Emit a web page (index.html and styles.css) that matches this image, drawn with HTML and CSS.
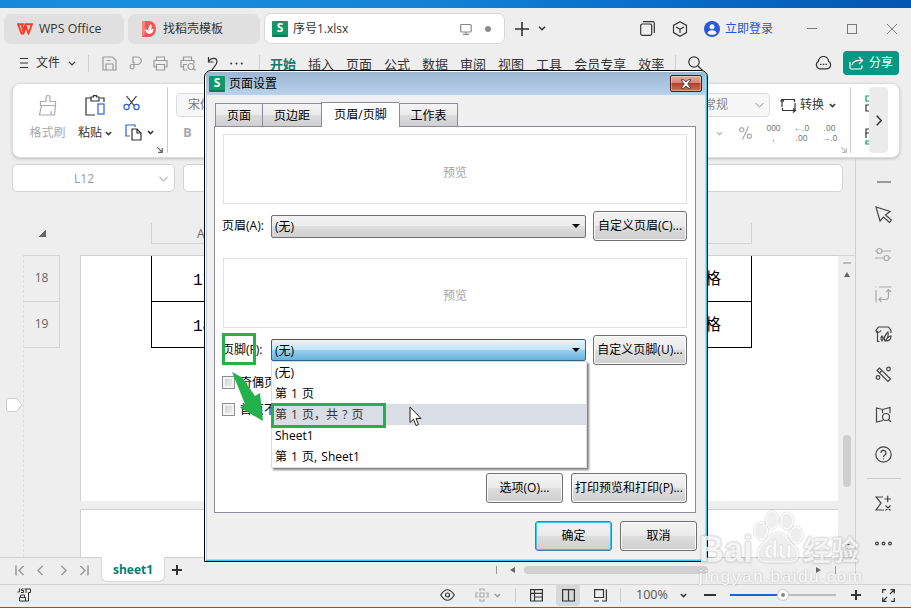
FILE: index.html
```html
<!DOCTYPE html>
<html lang="zh-CN">
<head>
  <meta charset="UTF-8">
  <title>序号1.xlsx - WPS Office</title>
  <link rel="stylesheet" href="styles.css">
</head>
<body>
  <div class="app">
    <div class="desktop-strip"></div>

    <header class="titlebar">
      <div class="doc-tab tab-home">
        <svg width="16" height="12" viewBox="0 0 16 12"><path d="M1 1.200h5l-1 2 1.200 5L8.500 1.200h6.500L11.500 10.500 9 3.500 6.500 10.500H4.500z" fill="none" stroke="#f4402a" stroke-width="1.900"/></svg>
        <span>WPS Office</span>
      </div>
      <div class="doc-tab tab-docer">
        <svg width="14" height="16" viewBox="0 0 14 16"><path d="M0 0h7a7 8 0 0 1 0 16H0z" fill="#ee5657"/><path d="M0 0h3v13l-3 3z" fill="#f98080"/><path d="M7 13c-3-1-4-3-3.500-5 1.500.5 2.500 1.500 3 2.500C6 8 6.500 5 9 3c1 2 .8 4-.2 6 .8-.8 1.700-1.200 2.700-1.200C11.500 11 10 13 7 13z" fill="#fff"/></svg>
        <span>找稻壳模板</span>
      </div>
      <div class="doc-tab tab-file">
        <span class="s-logo">S</span>
        <span>序号1.xlsx</span>
        <svg class="ic monitor" width="12" height="12" viewBox="0 0 12 12"><rect x=".7" y="1.500" width="10.500" height="7.500" rx="1"/><path d="M6 9v2M3 11.300h6"/></svg>
        <i class="unsaved"></i>
      </div>
      <svg class="ic new-tab" width="14" height="14" viewBox="0 0 14 14"><path d="M7 0v14M0 7h14" stroke-width="1.600"/></svg>
      <svg class="ic chev" width="8" height="5" viewBox="0 0 8 5"><path d="M1 .8l3 3 3-3" stroke-width="1.500"/></svg>
      <div class="window-tools">
        <svg class="ic" width="15" height="15" viewBox="0 0 15 15"><path d="M3 .7h9.500a1.800 1.800 0 0 1 1.800 1.800V12"/><rect x=".7" y="3" width="11" height="11.300" rx="1.500"/></svg>
        <svg class="ic cube" width="16" height="16" viewBox="0 0 16 16"><path d="M8 .8l6.500 3.600v7.200L8 15.200l-6.500-3.600V4.400zM4 6l4 2.200L12 6M8 8.200V12"/></svg>
        <svg class="avatar" width="16" height="16" viewBox="0 0 16 16"><circle cx="8" cy="8" r="8" fill="#2b57d9"/><circle cx="8" cy="5.700" r="2.500" fill="#fff"/><path d="M3.500 12.300c0-4 9-4 9 0-2.500 2-6.500 2-9 0z" fill="#fff"/></svg>
        <span class="login">立即登录</span>
        <svg class="ic win-btn" width="10" height="10" viewBox="0 0 10 10"><path d="M0 4.500h10"/></svg>
        <svg class="ic win-btn" width="10" height="10" viewBox="0 0 10 10"><rect x=".5" y=".5" width="9" height="9"/></svg>
        <svg class="ic win-btn" width="10" height="10" viewBox="0 0 10 10"><path d="M0 0l10 10M10 0L0 10"/></svg>
      </div>
    </header>

    <nav class="menubar">
      <div class="file-menu">
        <svg class="ic" width="8" height="12" viewBox="0 0 8 12"><path d="M0 1.500h8M0 6h8M0 10.500h8"/></svg>
        <span>文件</span>
        <svg class="ic" width="8" height="5" viewBox="0 0 8 5"><path d="M1 .8l3 3 3-3"/></svg>
      </div>
      <div class="quick-tools">
        <svg class="ic" width="15" height="15" viewBox="0 0 15 15"><path d="M1 1h9.500L14 4.500V14H1zM4 14V8h7v6M4.500 4.500h4"/></svg>
        <svg class="ic" width="13" height="14" viewBox="0 0 13 14"><path d="M4 7V1h4a4 3.500 0 0 1 0 7.500H3a2.200 2.200 0 1 0 2 3.500V6"/></svg>
        <svg class="ic" width="15" height="15" viewBox="0 0 15 15"><path d="M3.500 4.500V1h8v3.500M3.500 11H1V4.500h13V11h-2.500M3.500 8.500h8v5.500h-8z"/></svg>
        <svg class="ic" width="16" height="15" viewBox="0 0 16 15"><path d="M3.500 4.500V1h8v3.500M3.500 11H1V4.500h13v3M3.500 14V8.500H7M3.500 14H7M13.500 12.500L15.500 14.500"/><circle cx="11" cy="10.500" r="3"/></svg>
        <svg class="ic dark" width="11" height="15" viewBox="0 0 11 15"><path d="M1.500 1v5h5M1.500 5.500C4 1 10 1.500 10 5.500c0 3-3 5-5 8.500"/></svg>
        <svg width="13" height="3" viewBox="0 0 13 3" fill="#333"><circle cx="1.200" cy="1.500" r="1"/><circle cx="6.500" cy="1.500" r="1"/><circle cx="11.800" cy="1.500" r="1"/></svg>
      </div>
      <ul class="menu">
        <li class="active">开始</li><li>插入</li><li>页面</li><li>公式</li><li>数据</li><li>审阅</li><li>视图</li><li>工具</li><li>会员专享</li><li>效率</li>
      </ul>
      <svg class="ic search" width="15" height="15" viewBox="0 0 15 15"><circle cx="6" cy="6" r="5.200"/><path d="M10 10l4.500 4.500"/></svg>
      <svg class="ic cloud" width="17" height="14" viewBox="0 0 17 14"><path d="M5 12.800a4 4 0 0 1-1.500-7.500 5 4.800 0 0 1 10 0A4 4 0 0 1 12 12.800zM5 8.300h1.500M7.800 8.300h1.500M10.500 8.300H12"/></svg>
      <button class="share">
        <svg class="ic" width="15" height="14" viewBox="0 0 15 14"><path d="M1 6v5.500A1.500 1.500 0 0 0 2.500 13h9a1.500 1.500 0 0 0 1.500-1.500V9.500M3 9c1-3.500 4-5 10-4.500M10 1l3.500 3.500L10 8"/></svg>
        <span>分享</span>
      </button>
    </nav>

    <section class="ribbon">
      <div class="tool painter">
        <svg class="ic" width="20" height="21" viewBox="0 0 20 21"><path d="M8 6.500V2.500a2 2 0 0 1 4 0v4h5.500v4h-15v-4zM3.500 10.500L1.500 20h15l1-9.500M13 20v-4"/></svg>
        <span>格式刷</span>
      </div>
      <div class="tool paste">
        <svg class="ic" width="21" height="21" viewBox="0 0 21 21"><path d="M6 3H1v17h9M15 3h4v4M6 2h2.500V.7h3V2H14v4H6z"/><rect x="13" y="9" width="6" height="10" stroke="#2b5fd9"/></svg>
        <span>粘贴<svg class="ic" width="7" height="5" viewBox="0 0 8 5"><path d="M1 .8l3 3 3-3" stroke-width="1.700"/></svg></span>
      </div>
      <div class="tool cut-copy">
        <svg class="ic" width="17" height="16" viewBox="0 0 17 16"><path d="M3.500 1L11 10.500M13.500 1L6 10.500"/><circle cx="3.500" cy="12" r="2.600" stroke="#2b5fd9"/><circle cx="13.500" cy="12" r="2.600" stroke="#2b5fd9"/></svg>
        <span><svg class="ic" width="17" height="17" viewBox="0 0 17 17"><path d="M10 3V1H1v11h4" stroke="#2b5fd9"/><path d="M7 5h5l4 4v7H7zM12 5v4h4"/></svg><svg class="ic" width="7" height="5" viewBox="0 0 8 5"><path d="M1 .8l3 3 3-3" stroke-width="1.700"/></svg></span>
      </div>
      <svg class="ic launcher" width="6" height="6" viewBox="0 0 6 6"><path d="M0 0l5 5M5.300 1v4.300H1"/></svg>
      <div class="font-group">
        <div class="select">宋体</div>
        <b>B</b>
      </div>
      <div class="number-group">
        <div class="number-row">
          <div class="select number-format"><span>常规</span><svg class="ic" width="9" height="6" viewBox="0 0 9 6"><path d="M.5 1l4 4 4-4"/></svg></div>
          <svg class="ic" width="17" height="16" viewBox="0 0 17 16"><path d="M2 10V2.500h12.500V5M.5 4.500l1.500-2 2 2M15 6v7.500H2.500V11M13 11.500l2.500 2-2.500 2"/></svg>
          <span class="convert">转换</span>
          <svg class="ic" width="7" height="5" viewBox="0 0 8 5"><path d="M1 .8l3 3 3-3" stroke-width="1.700"/></svg>
        </div>
        <div class="number-row formats">
          <svg class="ic" width="7" height="5" viewBox="0 0 8 5"><path d="M1 .8l3 3 3-3"/></svg>
          <svg class="ic" width="13" height="14" viewBox="0 0 13 14"><circle cx="2.700" cy="3.700" r="2.100"/><circle cx="10.300" cy="10.300" r="2.100"/><path d="M9.500 .5l-6 13"/></svg>
          <span class="digits"><span>000</span><span>,</span></span>
          <span class="digits"><span>←.0</span><span>.00</span></span>
          <span class="digits"><span>.00</span><span>→.0</span></span>
        </div>
      </div>
      <svg class="ic launcher muted" width="6" height="6" viewBox="0 0 6 6"><path d="M0 0l5 5M5.300 1v4.300H1"/></svg>
      <div class="cut-off">
        <svg class="ic" width="5" height="18" viewBox="0 0 5 18"><path d="M5 1H1v5h4" stroke="#0b8f6a"/><path d="M5 10H1v6h4"/></svg>
        <svg class="ic" width="5" height="18" viewBox="0 0 5 18"><path d="M5 1H1v9M1 5h4"/><path d="M5 13H1v3h4" stroke="#0b8f6a"/></svg>
      </div>
      <div class="ribbon-next"><svg class="ic" width="6" height="11" viewBox="0 0 6 11"><path d="M.7 .7l4.500 4.800L.7 10.300" stroke-width="1.500"/></svg></div>
    </section>

    <div class="workspace">
      <main>
        <div class="formula-row">
          <div class="name-box"><span>L12</span><svg class="ic" width="9" height="6" viewBox="0 0 9 6"><path d="M.5 1l4 4 4-4"/></svg></div>
          <div class="formula-box"></div>
        </div>
        <div class="col-heads">
          <i class="select-all"></i>
          <div class="col-strip"><span>A</span></div>
        </div>
        <div class="grid-area">
          <div class="row-heads"><div>18</div><div>19</div><i class="page-mark"><svg width="17" height="14" viewBox="0 0 17 14"><path d="M.5 2A1.500 1.500 0 0 1 2 .5h8.500L16 7l-5.500 6.500H2A1.500 1.500 0 0 1 .5 12z" fill="#fff" stroke="#ccc"/></svg></i></div>
          <div class="pages">
            <div class="page">
              <table>
                <tr><td>17</td><td>合格</td></tr>
                <tr><td>18</td><td>合格</td></tr>
              </table>
            </div>
            <div class="page next"></div>
          </div>
          <div class="v-scroll"><i class="v-split"></i><i class="v-up"></i><i class="v-thumb"></i><i class="v-down"></i></div>
        </div>
        <div class="sheet-bar">
          <svg class="ic nav" width="9" height="11" viewBox="0 0 9 11"><path d="M1 .5v10M8.500 1L4 5.500 8.500 10"/></svg>
          <svg class="ic nav" width="6" height="11" viewBox="0 0 6 11"><path d="M5.500 1L1 5.500 5.500 10"/></svg>
          <svg class="ic nav" width="6" height="11" viewBox="0 0 6 11"><path d="M.5 1L5 5.500 .5 10"/></svg>
          <svg class="ic nav" width="9" height="11" viewBox="0 0 9 11"><path d="M8 .5v10M.5 1L5 5.500 .5 10"/></svg>
          <div class="sheet-tab">sheet1</div>
          <svg class="ic add-sheet" width="10" height="10" viewBox="0 0 10 10"><path d="M5 0v10M0 5h10" stroke-width="2"/></svg>
          <div class="h-scroll"><i class="tick"></i><i class="h-left"></i><i class="h-thumb"></i><i class="h-right"></i><i class="tick"></i></div>
        </div>
      </main>
      <aside class="sidebar">
        <i class="collapse"></i>
        <svg class="ic" width="17" height="17" viewBox="0 0 17 17"><path d="M1 1l14 4.500-4.500 3.500 6 5-2 2.500-6-5.500L5 15z"/></svg>
        <svg class="ic off" width="17" height="17" viewBox="0 0 17 17"><circle cx="4.500" cy="5" r="2.500"/><circle cx="11.500" cy="12" r="2.500"/><path d="M0 5h2M7 5h9M0 12h9M14 12h2"/></svg>
        <svg class="ic off" width="17" height="17" viewBox="0 0 17 17"><path d="M1 4v12.500M4 1h12.500M.5 1h1M13.500 4v6.500a3 3 0 0 1-3 3H4M11 6l2.500-2.500L16 6M6.500 11L4 13.500 6.500 16"/></svg>
        <svg class="ic" width="17" height="17" viewBox="0 0 17 17"><path d="M4.500 15.500H2.500V7A3 3 0 0 1 1 4.500L3.500 1h10L16 4.500V7M1 4.500q3 3.500 5 0M7 15c-2-3-1-4 0-5 1 1 1.500 3 0 5zM10 15c-2-3 1-7 3-9 1 3-1 7-3 9zM11 15c1-3 3-5 5-5 0 3-2 5-5 5z"/></svg>
        <svg class="ic" width="17" height="17" viewBox="0 0 17 17"><path d="M2 4.500L4.500 2 15.500 13 13 15.500zM4.500 7L7 4.500"/><circle cx="13.500" cy="3" r="1.800"/><circle cx="3" cy="11.500" r="1.800"/></svg>
        <svg class="ic" width="17" height="17" viewBox="0 0 17 17"><path d="M8 14.500L1.500 16V2L7.500 3.500 15 1.500V7M7.500 3.500V7M13.500 13.500l2.500 2.500"/><circle cx="11" cy="11" r="3.500"/></svg>
        <svg class="ic" width="17" height="17" viewBox="0 0 17 17"><circle cx="8.500" cy="8.500" r="7.700"/><path d="M6 7a2.500 2.500 0 1 1 3.500 2.200q-1 .5-1 1.800M8.500 12.500v1"/></svg>
        <hr>
        <svg class="ic" width="17" height="17" viewBox="0 0 17 17"><path d="M8 2H1l5 6-5 7h8M9.500 4H16M12.700 .8v6.500M10.500 10.500l5 5M15.500 10.500l-5 5"/></svg>
        <svg class="ic more" width="17" height="17" viewBox="0 0 17 17"><circle cx="2" cy="8.500" r="1.400"/><circle cx="8.500" cy="8.500" r="1.400"/><circle cx="15" cy="8.500" r="1.400"/></svg>
      </aside>
    </div>

    <footer class="statusbar">
      <svg class="ic macro" width="15" height="14" viewBox="0 0 15 14"><path d="M2.500 .5v3.500H.5M6.500 1H4.500v1.500h2V4.500H4M7.500 1h6v3.500h-2v8.500H2.500V9.500h6V13M3.500 9.500V7H7.500v2.500M9 1v4" stroke-width="1"/></svg>
      <svg class="ic eye" width="15" height="12" viewBox="0 0 15 12"><path d="M.7 6q6.800-10.500 13.600 0-6.800 10.500-13.600 0z"/><circle cx="7.500" cy="6" r="2"/></svg>
      <svg class="ic target" width="14" height="14" viewBox="0 0 14 14"><path d="M5 3V1h4v2M5 11v2h4v-2M3 5H1v4h2M11 5h2v4h-2M5 5h4v4H5z"/></svg>
      <svg class="ic target-chev" width="7" height="5" viewBox="0 0 8 5"><path d="M1 .8l3 3 3-3" stroke-width="1.600"/></svg>
      <i class="sep"></i>
      <svg class="ic view" width="13" height="13" viewBox="0 0 13 13"><path d="M.6 .6h11.800v11.400H.6zM.6 4.300h11.800M4.500 .6V12M4.500 8h8"/></svg>
      <span class="view-on"><svg class="ic" width="13" height="13" viewBox="0 0 13 13"><path d="M.6 .6h11.800v11.400H.6zM6.500 .6V12"/></svg></span>
      <svg class="ic" width="13" height="13" viewBox="0 0 13 13"><path d="M.6 .6h8.900v7.900H.6zM12.400 .5v11.500H8M0 12h5"/></svg>
      <i class="sep second"></i>
      <span class="zoom-value">100%</span>
      <svg class="ic" width="7" height="5" viewBox="0 0 8 5"><path d="M1 .8l3 3 3-3" stroke-width="1.700"/></svg>
      <i class="minus"></i>
      <span class="slider"><i class="knob"></i></span>
      <svg class="ic plus" width="10" height="10" viewBox="0 0 10 10"><path d="M5 0v10M0 5h10" stroke-width="2"/></svg>
      <svg class="ic full" width="13" height="13" viewBox="0 0 13 13"><path d="M8.500 .7h3.800v3.800M12.300 .7L8 5M4.500 12.300H.7V8.500M.7 12.300L5 8M.7 4V.7H4M9 12.300h3.300V9"/></svg>
    </footer>
  </div>

  <div class="dialog">
    <div class="dialog-title">
      <span class="s-logo">S</span>
      <span>页面设置</span>
      <button class="close"><svg width="12" height="10" viewBox="0 0 12 10"><path d="M1 .8h3L6 3l2-2.200h3L7.800 5 11 9.200H8L6 7 4 9.200H1L4.200 5z" fill="#fff" stroke="#444"/></svg></button>
    </div>
    <div class="dialog-body">
      <div class="tabs">
        <span class="t1">页面</span><span class="t2">页边距</span><span class="on">页眉/页脚</span><span class="t4">工作表</span>
      </div>
      <div class="pane">
        <div class="preview">预览</div>
        <div class="field">
          <label>页眉(A):</label>
          <div class="combo">(无)<i></i></div>
          <button class="btn">自定义页眉(C)...</button>
        </div>
        <div class="preview second">预览</div>
        <div class="field">
          <label>页脚(F):</label>
          <div class="combo open">(无)<i></i>
            <ul class="dropdown">
              <li>(无)</li>
              <li>第 1 页</li>
              <li class="hover">第 1 页，共 ? 页</li>
              <li>Sheet1</li>
              <li>第 1 页, Sheet1</li>
            </ul>
          </div>
          <button class="btn">自定义页脚(U)...</button>
        </div>
        <div class="check"><i></i>奇偶页不同</div>
        <div class="check"><i></i>首页不同</div>
        <div class="pane-actions">
          <button class="btn options">选项(O)...</button>
          <button class="btn">打印预览和打印(P)...</button>
        </div>
      </div>
      <div class="dialog-actions">
        <button class="btn primary">确定</button>
        <button class="btn">取消</button>
      </div>
    </div>
  </div>

  <!-- tutorial marks -->
  <div class="mark mark-label"></div>
  <div class="mark mark-option"></div>
  <svg class="arrow" width="34" height="52" viewBox="0 0 34 52"><path d="M1 1L11 6.500 24 25l5-3 3 28L9 36.500l5-3.500z" fill="#22b14c"/></svg>
  <svg class="cursor" width="14" height="21" viewBox="0 0 14 21"><path d="M1 1v15.500l3.500-3.300L7 19.500l2.500-1L7 12.500h5z" fill="#fff" stroke="#222"/></svg>

  <div class="watermark">
    <svg width="164" height="80" viewBox="0 0 164 80">
      <g class="wm-shape">
        <ellipse cx="62" cy="21" rx="6.500" ry="8.500"/><ellipse cx="73" cy="10" rx="6" ry="8.500"/><ellipse cx="88" cy="11" rx="6" ry="8"/><ellipse cx="97" cy="25" rx="6.500" ry="8"/>
        <path d="M79 23c8 0 10 7 14 11 9 8 8 18-3 18H68c-10 0-12-10-5-17 6-5 9-12 16-12z"/>
      </g>
      <g class="wm-text"><text x="0" y="52" font-size="36" textLength="54" lengthAdjust="spacingAndGlyphs">Bai</text><text x="65" y="48" font-size="23">du</text><text x="104" y="51" font-size="28">经验</text></g>
      <text class="wm-url" x="0" y="72" font-size="17" textLength="163">jingyan.baidu.com</text>
    </svg>
  </div>
</body>
</html>
```
FILE: styles.css
```css
* { box-sizing: border-box; }
body {
  margin: 0;
  width: 911px;
  height: 608px;
  overflow: hidden;
  position: relative;
  background: #eee;
  color: #333;
  font: 12px/16px "Open Sans", "Noto Sans CJK SC", sans-serif;
}
i { display: block; flex: none; font-style: normal; }
svg { display: block; flex: none; }
ul { list-style: none; margin: 0; padding: 0; }
button { font: inherit; padding: 0; margin: 0; }
.ic { fill: none; stroke: currentColor; stroke-width: 1.2; }
.app { display: flex; flex-direction: column; height: 608px; }
.desktop-strip { height: 8px; flex: none; background: linear-gradient(90deg, #168ada, #188fdd 15%, #1583d6 45%, #0870cb 70%, #0356b0); }

/* title bar */
.titlebar { display: flex; align-items: center; height: 41px; flex: none; }
.doc-tab { display: flex; align-items: center; height: 30px; border-radius: 7px; background: #e0e0e0; }
.tab-home { width: 120px; margin-left: 4px; padding-left: 13px; gap: 6px; font-size: 12.3px; }
.tab-docer { width: 132px; margin-left: 4px; padding-left: 14px; gap: 7px; }
.tab-file { width: 241px; height: 31px; margin-left: 4px; padding-left: 7px; gap: 5px; background: #fff; border: 1px solid #d8d8d8; }
.s-logo { width: 16px; height: 16px; flex: none; background: #109868; border-bottom: 2px solid #0b7c54; border-radius: 1px; color: #fff; font: bold 12px/14px "Open Sans", sans-serif; text-align: center; }
.monitor { margin-left: auto; color: #888; }
.unsaved { width: 6px; height: 6px; margin: 0 13px 0 8px; border-radius: 50%; background: #8c8c8c; }
.new-tab { margin-left: 10px; }
.chev { margin-left: 9px; }
.window-tools { display: flex; align-items: center; height: 38px; margin-left: auto; padding-right: 14px; }
.cube { margin-left: 17px; }
.avatar { margin-left: 16px; }
.login { width: 49px; margin: 0 33px 0 5px; color: #2158cd; white-space: nowrap; }
.win-btn { color: #7b7b7b; stroke-width: 1; }
.win-btn + .win-btn { margin-left: 30px; }

/* menu bar */
.menubar { display: flex; align-items: center; height: 28px; flex: none; padding-right: 12px; }
.file-menu { display: flex; align-items: center; width: 69px; margin-left: 20px; gap: 8px; height: 17px; border-right: 1px solid #d0d0d0; }
.quick-tools { display: flex; align-items: center; width: 171px; height: 17px; gap: 11.5px; padding-left: 13px; border-right: 1px solid #d0d0d0; color: #9a9a9a; }
.quick-tools .dark { color: #333; }
.menu { display: flex; gap: 12px; width: 406px; height: 17px; margin-left: 10px; border-right: 1px solid #d0d0d0; font-size: 13px; line-height: 18px; white-space: nowrap; }
.menu .active { color: #0a7c6c; font-weight: bold; }
.search { margin-left: 12px; }
.cloud { margin-left: auto; }
.share { display: flex; align-items: center; justify-content: center; gap: 5px; width: 56px; height: 24px; margin-left: 11px; border: 0; border-radius: 4px; background: #089783; color: #fff; }

/* ribbon */
.ribbon { display: flex; height: 75px; flex: none; margin: 6px 11px 0 12px; padding: 3px 11px 4px 16px; border: 1px solid #dcdcdc; border-radius: 8px; background: #fff; box-shadow: 0 1px 3px rgba(0,0,0,.2); }
.tool { display: flex; flex-direction: column; align-items: center; justify-content: space-between; height: 54px; padding-top: 8px; white-space: nowrap; }
.tool span { display: flex; align-items: center; gap: 3px; }
.painter { width: 37px; color: #aaa; }
.paste { width: 36px; margin-left: 12px; align-items: flex-start; }
.paste > svg { margin-left: 7px; }
.cut-copy { margin-left: 9px; align-items: flex-start; }
.cut-copy span { gap: 5px; margin-left: 2px; }
.cut-copy { margin-right: -2px; }
.launcher { align-self: flex-end; margin: 0 4px 0 5px; color: #666; }
.launcher.muted { margin: 0 3px 0 0; color: #bbb; }
.font-group { border-left: 1px solid #ccc; padding: 6px 0 0 8px; width: 120px; color: #888; }
.font-group b { display: block; margin: 7px 0 0 7px; color: #aaa; font-size: 13px; }
.select { display: flex; align-items: center; height: 24px; padding-left: 11px; border: 1px solid #ddd; border-radius: 4px; background: #f7f7f7; color: #777; }
.number-group { width: 181px; margin-left: auto; padding-top: 6px; }
.number-row { display: flex; align-items: center; }
.number-format { width: 110px; padding: 0 5px 0 43px; justify-content: space-between; margin-right: 10px; background: #f7f7f7; color: #888; }
.number-format svg { color: #bbb; }
.convert { margin: 0 5px 0 3px; }
.formats { height: 32px; padding-left: 56px; color: #aaa; }
.formats svg + svg { margin: 0 14px 0 16px; }
.digits { display: flex; flex-direction: column; align-items: center; width: 15px; margin-right: 13px; font: 8.5px/10px "Liberation Sans", sans-serif; white-space: nowrap; color: #777; }
.digits:last-child { margin-right: 0; }
.cut-off { display: flex; flex-direction: column; justify-content: space-around; width: 19px; padding-left: 14px; border-left: 1px solid #ccc; }
.ribbon-next { display: flex; align-items: center; justify-content: center; width: 19px; border-radius: 4px; background: #ececec; }

/* workspace */
.workspace { display: flex; height: 426px; flex: none; }
main { display: flex; flex-direction: column; width: 855px; }
.formula-row { display: flex; gap: 8px; padding: 6px 12px 0; flex: none; height: 34px; }
.name-box, .formula-box { border: 1px solid #d3d3d3; border-radius: 5px; background: #fff; }
.name-box { display: flex; align-items: center; width: 163px; padding: 1px 6px 0 61px; justify-content: space-between; color: #999; }
.name-box svg { color: #bbb; }
.formula-box { width: 660px; }
.col-heads { display: flex; height: 63px; flex: none; padding: 31px 0 0 38px; }
.select-all { width: 8px; height: 7px; margin: 7px 105px 0 0; background: linear-gradient(135deg, transparent 50%, #666 50%); }
.col-strip { width: 601px; height: 21px; padding-left: 45px; border: 1px solid #d3d3d3; border-top: 0; line-height: 22px; color: #666; }
.grid-area { display: flex; height: 302px; flex: none; }
.row-heads { position: relative; width: 57px; margin-left: 23px; padding-right: 20px; border-left: 1px dashed #ddd; color: #666; }
.row-heads div { height: 46px; border: solid #d6d6d6; border-width: 1px 1px 0 0; line-height: 44px; text-align: center; }
.row-heads div:nth-child(2) { height: 47px; border-bottom-width: 1px; }
.page-mark { position: absolute; left: -18px; top: 143px; }
.pages { width: 758px; }
.page { height: 246px; border: solid #d0d0d0; border-width: 1px 0 0 1px; background: #fff; padding-left: 70px; }
.page.next { height: 48px; margin-top: 8px; }
table { width: 601px; height: 92px; border-collapse: separate; border-spacing: 0; font: 16px/18px "Liberation Mono", "Noto Sans CJK SC", monospace; color: #000; }
td { height: 46px; padding: 5px 0 0 41px; border: 1px solid #000; border-width: 0 0 1px 1px; }
td + td { padding: 3px 30px 0 0; text-align: right; border-width: 0 1px 1px 0; }
.v-scroll { display: flex; flex-direction: column; align-items: center; width: 17px; border-top: 1px solid #d6d6d6; }
.v-split { width: 8px; height: 2px; margin-top: 6px; background: #bbb; }
.v-up, .v-down, .h-left, .h-right { width: 0; height: 0; border: 3px solid transparent; }
.v-up { margin-top: 5px; border-bottom: 5px solid #666; }
.v-thumb { width: 8px; height: 52px; margin-top: 158px; border-radius: 4px; background: #cfcfcf; }
.v-down { margin-top: 57px; border-top: 5px solid #666; }

.sheet-bar { display: flex; align-items: center; height: 27px; flex: none; border-top: 1px solid #d0d0d0; padding: 0 0 2px 15px; }
.nav { color: #999; stroke-width: 1.500; }
.nav + .nav { margin-left: 13px; }
.nav:nth-child(3) { margin-left: 18px; }
.sheet-tab { width: 64px; height: 25px; margin: -1px 7px 0 12px; align-self: flex-start; border: 1px solid #d8d8d8; border-top: 0; border-radius: 0 0 6px 6px; background: #fff; color: #087c6c; font-weight: bold; line-height: 25px; text-align: center; }
.h-scroll { display: flex; align-items: center; width: 340px; margin-left: auto; margin-right: 19px; }
.tick { width: 1px; height: 8px; background: #999; }
.h-left { margin-left: 10px; border-right: 5px solid #666; }
.h-thumb { width: 184px; height: 8px; margin-left: 9px; border-radius: 4px; background: #d0d0d0; }
.h-right { margin: 0 11px 0 108px; border-left: 5px solid #666; }

.sidebar { display: flex; flex-direction: column; align-items: center; width: 56px; height: 415px; border-left: 1px solid #d0d0d0; padding-top: 23px; color: #444; }
.sidebar .collapse { width: 14px; height: 2px; margin-bottom: 23px; background: #999; }
.sidebar svg + svg { margin-top: 23px; }
.sidebar .off { color: #aaa; }
.sidebar hr { width: 34px; margin: 15px 0 16px; border: 0; border-top: 1px solid #ccc; }

.statusbar { display: flex; align-items: center; height: 24px; flex: none; border-top: 1px solid #d3d3d3; border-bottom: 1px solid #1875b8; padding-bottom: 2px; }
.macro { margin-left: 17px; }
.eye { margin-left: 408px; }
.target { margin-left: 20px; color: #aaa; }
.target-chev { margin-left: 5px; color: #999; }
.sep { width: 1px; height: 14px; margin: 0 14px 0 14px; background: #ccc; }
.view-on { display: flex; align-items: center; justify-content: center; width: 24px; height: 22px; margin: 0 14px 0 13px; border-radius: 4px; background: #d8d8d8; }
.sep.second { margin: 0 15px 0 13px; }
.zoom-value { width: 33px; margin-right: 11px; font-size: 12.500px; color: #555; }
.minus { width: 12px; height: 2px; margin-left: 17px; background: #333; }
.slider { width: 106px; height: 2px; margin: 0 15px 0 14px; background: linear-gradient(90deg, #1f62cc 50%, #bbb 50%); }
.knob { width: 10px; height: 10px; margin: -4px 0 0 48px; border: 3px solid #fff; border-radius: 50%; background: #888; box-shadow: 0 0 1px 1px #ccc; }
.full { margin-left: 21px; }

/* page setup dialog */
.dialog {
  position: absolute;
  z-index: 1;
  left: 204px;
  top: 70px;
  width: 504px;
  height: 492px;
  border: 1px solid #000;
  border-radius: 7px 7px 0 0;
  background: #b9d1ea;
  padding: 1px;
  color: #000;
  overflow: hidden;
  box-shadow: inset 1px 1px #fff, inset -1px -1px #32c8e8;
}
.dialog-title { display: flex; align-items: center; height: 23px; padding: 0 3px; gap: 4px; margin-right: 1px; background: linear-gradient(#9db7d3, #b9d1ea); }
.close { display: flex; align-items: center; justify-content: center; width: 32px; height: 17px; margin-left: auto; border: 1px solid #4a1c20; border-radius: 2px; background: linear-gradient(#e8a99c, #d88373 48%, #b8402a 50%, #d07050); box-shadow: inset 0 0 0 1px rgba(255,255,255,.35); }
.dialog-body { height: 464px; margin: 0 1px 0 1px; padding: 7px 7px 0 8px; background: #f0f0f0; }
.tabs { display: flex; align-items: flex-end; height: 24px; }
.tabs span { height: 23px; border: 1px solid #8c8c96; border-right: 0; border-bottom: 0; background: linear-gradient(#f4f4f4, #eaeaea 49%, #dcdcdc 50%, #cfcfcf); line-height: 23px; text-align: center; }
.tabs .t1 { width: 47px; }
.tabs .t2 { width: 59px; }
.tabs .on { position: relative; width: 78px; height: 25px; margin-bottom: -1px; background: #fff; }
.tabs .t4 { width: 59px; border-right: 1px solid #8c8c96; }
.pane { width: 482px; height: 387px; margin-left: -1px; padding: 7px; border: 1px solid #8c8c96; background: #fff; }
.preview { height: 70px; width: 464px; margin-left: 1px; border: 1px solid #e0e0e0; line-height: 75px; text-align: center; color: #a5a5a5; }
.preview.second { margin-top: 17px; line-height: 73px; }
.field { display: flex; align-items: center; height: 30px; margin-top: 7px; white-space: nowrap; }
.field label { width: 49px; }
.combo { position: relative; width: 315px; height: 23px; margin-right: 7px; padding-left: 3px; border: 1px solid #707070; border-radius: 2px; background: linear-gradient(#f3f3f3, #ebebeb 48%, #ddd 50%, #cfcfcf); line-height: 21px; }
.combo > i { position: absolute; right: 5px; top: 8px; border: 4px solid transparent; border-top: 4px solid #000; border-bottom: 0; }
.combo.open { height: 22px; margin-bottom: 1px; border-color: #2c628b; background: linear-gradient(#e5f4fc, #c4e5f6 48%, #98d1ef 50%, #68b3db); }
.dropdown { position: absolute; z-index: 2; left: -1px; top: 21px; width: 316px; height: 107px; border: 1px solid #ddd; background: #fff; box-shadow: 2px 2px 2px rgba(0,0,0,.5); }
.dropdown li { height: 21px; padding-left: 3px; line-height: 21px; word-spacing: 1px; }
.dropdown .hover { background: #d9dde5; color: #333; }
.btn { width: 94px; height: 30px; flex: none; border: 1px solid #707070; border-radius: 3px; background: linear-gradient(#f3f3f3, #ebebeb 48%, #ddd 50%, #cfcfcf); box-shadow: inset 0 0 0 1px #fafafa; color: #000; white-space: nowrap; }
.check { display: flex; align-items: center; width: 50px; height: 13px; gap: 5px; margin-top: 14px; white-space: nowrap; }
.field + .check { margin-top: 11px; }
.check i { width: 13px; height: 13px; border: 1px solid #8e8f8f; background: linear-gradient(135deg, #ccc, #f4f4f4); box-shadow: inset 0 0 0 2px #f4f4f4; }
.pane-actions { display: flex; justify-content: flex-end; gap: 8px; margin: 57px 1px 0 0; }
.pane-actions .btn { width: 116px; }
.pane-actions .options { width: 77px; }
.dialog-actions { display: flex; justify-content: flex-end; gap: 8px; margin: 8px 0 0; padding-right: 1px; }
.dialog-actions .btn { width: 77px; }
.btn.primary { border-color: #3c7fb1; box-shadow: inset 0 0 0 1px #3bc8f0; }

/* marks drawn over the window */
.mark { position: absolute; z-index: 3; border: 3px solid #22b14c; }
.mark-label { left: 222px; top: 333px; width: 34px; height: 32px; }
.mark-option { left: 271px; top: 403px; width: 115px; height: 25px; }
.arrow { position: absolute; z-index: 3; left: 231px; top: 371px; }
.cursor { position: absolute; z-index: 3; left: 409px; top: 406px; }
.watermark { position: absolute; z-index: 3; left: 699px; top: 510px; filter: drop-shadow(0 0 1px rgba(0,0,0,.28)); }
.wm-shape { fill: #fff; fill-opacity: .6; stroke: #fff; stroke-width: 1; }
.wm-text { fill: #fff; fill-opacity: .8; stroke: #ddd; stroke-width: .5; font-family: "Liberation Sans", "Noto Sans CJK SC", sans-serif; font-weight: bold; }
.wm-url { fill: #fff; fill-opacity: .8; font-family: "Liberation Sans", sans-serif; }
```
